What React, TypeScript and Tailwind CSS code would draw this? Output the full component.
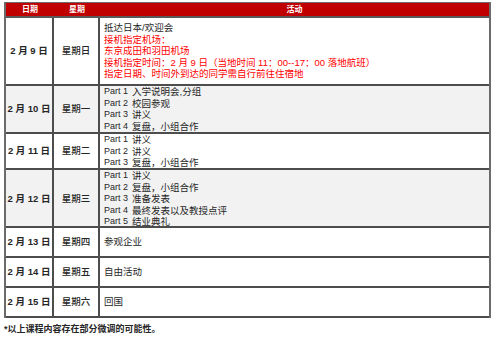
const cn = '"Liberation Sans", "Noto Sans CJK SC", sans-serif';

type Line = { text: string; part?: string; red?: boolean };

interface Row {
  date: string;
  day: string;
  height: string;
  gray?: boolean;
  lines: Line[];
}

const rows: Row[] = [
  {
    date: "2 月 9 日",
    day: "星期日",
    height: "h-[68px]",
    lines: [
      { text: "抵达日本/欢迎会" },
      { text: "接机指定机场：", red: true },
      { text: "东京成田和羽田机场", red: true },
      { text: "接机指定时间：2 月 9 日（当地时间 11：00--17：00 落地航班）", red: true },
      { text: "指定日期、时间外到达的同学需自行前往住宿地", red: true },
    ],
  },
  {
    date: "2 月 10 日",
    day: "星期一",
    height: "h-[48px]",
    gray: true,
    lines: [
      { part: "Part 1", text: "入学说明会,分组" },
      { part: "Part 2", text: "校园参观" },
      { part: "Part 3", text: "讲义" },
      { part: "Part 4", text: "复盘，小组合作" },
    ],
  },
  {
    date: "2 月 11 日",
    day: "星期二",
    height: "h-[36px]",
    lines: [
      { part: "Part 1", text: "讲义" },
      { part: "Part 2", text: "讲义" },
      { part: "Part 3", text: "复盘，小组合作" },
    ],
  },
  {
    date: "2 月 12 日",
    day: "星期三",
    height: "h-[58px]",
    gray: true,
    lines: [
      { part: "Part 1", text: "讲义" },
      { part: "Part 2", text: "复盘，小组合作" },
      { part: "Part 3", text: "准备发表" },
      { part: "Part 4", text: "最终发表以及教授点评" },
      { part: "Part 5", text: "结业典礼" },
    ],
  },
  { date: "2 月 13 日", day: "星期四", height: "h-[30px]", lines: [{ text: "参观企业" }] },
  { date: "2 月 14 日", day: "星期五", height: "h-[30px]", lines: [{ text: "自由活动" }] },
  { date: "2 月 15 日", day: "星期六", height: "h-[30px]", lines: [{ text: "回国" }] },
];

export default function App() {
  return (
    <div className="h-[342px] w-[495px] bg-white pl-[4px] pt-[2px] text-[#262626]" style={{ fontFamily: cn }}>
      <div className="w-[487px] border-t border-l-2 border-r-2 border-[#6b6b6b]">
        <div className="grid h-[15px] grid-cols-[48px_46px_1fr] items-center bg-[#c00000] text-[8px] font-bold text-white border-b-2 border-[#595959]">
          <div className="text-center">日期</div>
          <div className="text-center">星期</div>
          <div className="text-center">活动</div>
        </div>
        {rows.map((row) => (
          <div
            key={row.date}
            className={`grid grid-cols-[48px_46px_1fr] border-b-2 border-[#4d4d4d] ${row.height} ${row.gray ? "bg-[#f2f2f2]" : "bg-white"}`}
          >
            <div className="flex items-center justify-center border-r-2 border-[#4d4d4d] text-[9.5px] font-bold">
              {row.date}
            </div>
            <div className="flex items-center justify-center border-r-2 border-[#4d4d4d] text-[9.5px] font-medium">
              {row.day}
            </div>
            <div className="flex flex-col justify-center pl-[4px] text-[9.5px]">
              {row.lines.map((line, i) => (
                <div
                  key={i}
                  className={`flex h-[11.5px] shrink-0 items-center whitespace-nowrap leading-none ${line.red ? "text-[#ff0000]" : ""}`}
                >
                  {line.part && <span className="w-[28px] shrink-0 text-[9px]">{line.part}</span>}
                  <span>{line.text}</span>
                </div>
              ))}
            </div>
          </div>
        ))}
      </div>
      <div className="mt-[5px] text-[9px] font-bold">*以上课程内容存在部分微调的可能性。</div>
    </div>
  );
}
